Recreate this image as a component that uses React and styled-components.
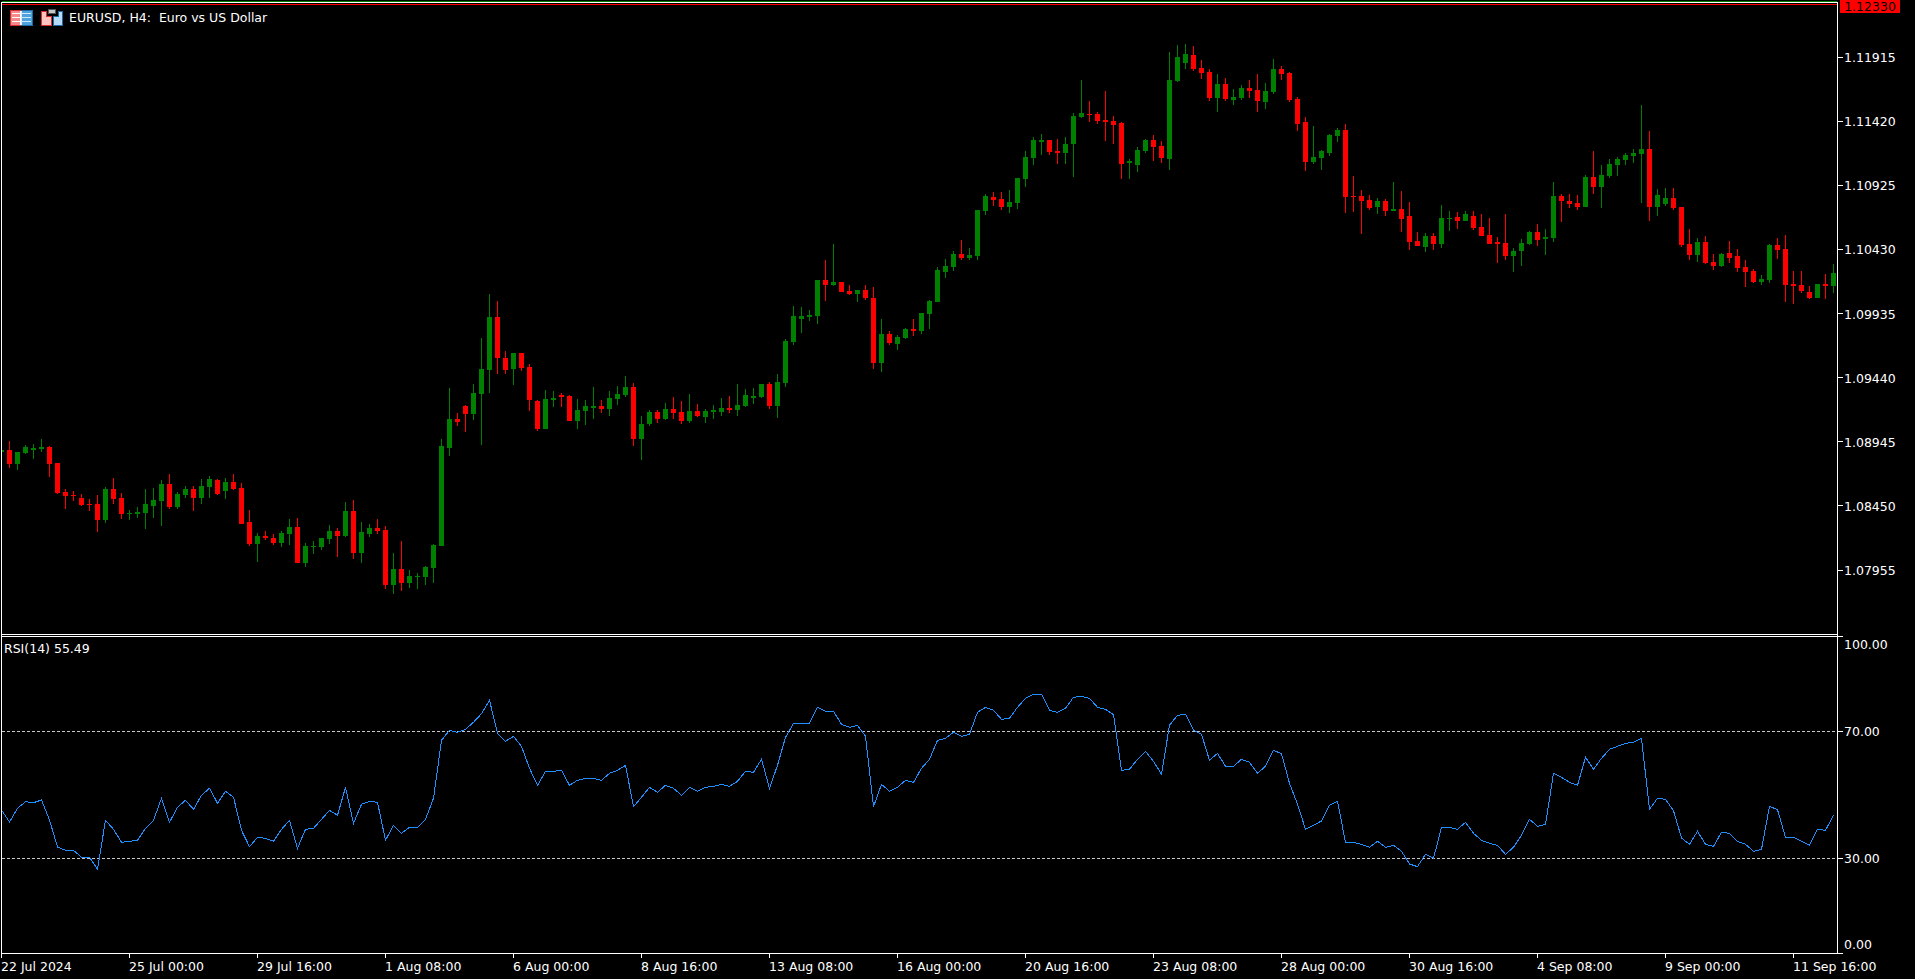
import React from "react";
import styled, { createGlobalStyle } from "styled-components";

const GREEN = "#008000";
const RED = "#ff0000";
const RSI_BLUE = "#1e90ff";

// Candle rows as [high, open/close top, open/close bottom, low], measured at 3x from the origin y0.
const candleBlocks = [
  { y0: 400, rows: `G 126 150 156 180
R 123 150 192 204
G 156 156 192 210
G 135 141 159 162
G 132 144 150 177
G 117 141 147 156
R 138 141 192 231
R 189 189 279 282
R 267 276 288 327
R 273 285 288 303
R 282 294 315 318
R 297 312 315 333
R 285 312 360 396
G 261 267 360 369
R 234 267 297 312
R 279 294 342 357
G 330 339 342 360
G 321 336 342 354
G 267 312 339 387
G 264 300 318 354
G 240 252 303 378
R 222 252 321 327
G 276 282 321 327
G 258 267 285 294
R 258 267 294 333
G 237 258 294 312
G 228 237 261 294
R 237 240 282 285
G 234 246 273 297
R 222 246 267 270
R 249 264 372 372
R 330 366 432 438
G 399 408 432 486
R 393 408 414 420
R 402 414 429 435
G 393 399 429 441
G 357 381 402 435
R 354 381 489 489
G 429 438 489 501
G 423 438 441 462
G 414 414 441 450
G 375 393 417 432
R 384 393 408 471
G 306 333 408 411
R 300 333 459 477
G 366 396 459 489
G 372 384 402 411
R 357 384 393 402
R 378 390 555 567
G 459 507 555 582
R 423 507 549 573
G 510 528 549 564
G 519 528 531 567
G 498 501 531 555
G 432 435 504 549
G 117 138 438 438
G -36 57 144 168
R 39 57 66 78
R 15 18 42 96` },
  { y0: 240, rows: `G 432 459 522 540
G 294 387 462 615
G 162 231 390 459
R 183 231 354 402
R 333 354 390 402
G 339 339 387 435
R 339 339 384 393
R 372 381 480 513
R 480 483 567 573
G 450 477 567 567
G 453 474 480 501
R 459 465 471 501
R 465 468 543 543
G 477 510 543 567
G 480 498 513 555
G 441 498 504 537
R 480 498 507 519
G 453 474 507 528
G 438 462 477 495
G 408 441 465 471
R 429 441 597 618
G 528 552 597 660
G 510 516 552 558
R 510 516 537 549
G 489 507 537 540
R 471 507 519 537
R 483 516 543 552
G 462 513 543 549
R 492 513 528 531
G 507 513 531 549
G 495 510 516 537
G 474 504 516 528
R 468 504 510 519
G 432 495 510 528
G 447 465 498 501
G 444 468 474 492
G 432 432 471 474
R 426 432 498 507
G 402 426 498 534
G 297 303 429 441
G 198 228 306 315
G 201 228 237 279
G 210 225 231 243
G 120 120 228 252
R 60 120 135 183
G 12 126 135 138
R 126 126 156 156
R 135 153 162 165
G 150 150 162 186
R 135 150 174 180
R 141 174 369 387
G 237 282 369 396
R 273 282 309 315
G 285 291 312 330
G 264 267 294 297
R 237 267 273 288
G 219 219 273 282
G 180 183 222 267
G 81 90 186 186
G 57 78 96 114
G 33 42 81 93` },
  { y0: 40, rows: `R 600 642 654 660
G 624 645 654 660
G 510 510 648 660
G 462 468 513 525
R 456 471 480 498
R 456 477 501 510
G 450 486 501 519
G 414 414 489 507
G 333 351 417 441
G 291 300 354 375
G 282 300 306 345
R 300 300 336 345
R 297 333 339 372
G 291 312 339 372
G 219 228 312 411
G 120 219 231 234
R 183 222 225 246
R 216 222 243 252
R 153 240 246 303
R 228 243 255 312
R 246 249 372 417
G 357 363 369 417
G 321 330 375 396
G 297 300 333 339
R 285 300 321 363
R 303 318 354 369
G 36 120 357 390
G 15 51 123 126
G 12 42 69 87
R 18 45 87 93
R 60 84 99 117
R 87 96 174 183
G 102 132 174 216
R 114 132 177 183
G 147 171 180 195
G 135 144 174 180
R 120 144 153 174
R 102 150 183 216
G 129 153 186 207
G 57 87 156 162
R 78 87 102 120
R 96 99 180 186
R 171 177 252 273
R 231 246 366 393
G 258 351 366 372
G 330 333 354 390
G 282 285 339 348
G 264 270 288 306
R 252 270 471 519
R 408 468 471 516
R 450 468 483 582
R 465 480 504 510
G 474 483 501 522
R 477 483 513 528
G 426 507 513 513
R 453 507 537 576
R 486 528 606 630
R 576 603 618 618
G 579 588 621 636
R 579 588 612 630
G 495 534 612 624` },
  { y0: 100, rows: `G 333 354 357 393
R 336 351 363 387
G 333 342 363 363
R 333 348 384 390
R 342 381 408 408
R 354 405 432 432
R 411 426 432 489
R 342 429 468 480
G 444 453 468 516
G 417 429 453 498
G 393 396 432 435
R 372 396 420 438
G 387 411 417 465
G 246 288 414 426
R 282 288 303 366
R 282 303 312 324
R 285 309 321 330
G 225 231 321 321
R 153 231 261 282
G 195 225 261 324
G 177 192 228 234
G 171 177 195 228
G 159 165 180 195
G 147 159 168 189
G 15 147 162 309
R 93 147 321 363
G 267 285 321 348
G 264 294 312 318
R 264 294 324 330
R 321 321 435 441
R 387 432 465 480
G 414 426 465 486
R 408 426 489 492
R 462 486 498 510
G 459 462 498 501
R 423 459 474 489
R 447 468 504 516
R 480 501 516 561
R 507 513 546 549
G 525 537 546 555
G 432 435 540 549
R 414 435 450 477
R 405 447 555 606
R 513 552 558 612
R 513 555 573 579
R 558 576 594 597
G 552 552 594 594
R 522 552 558 597
G 492 519 558 579` },
];

const candles = candleBlocks.flatMap(({ y0, rows }) =>
  rows.split("\n").map((row) => {
    const [dir, ...values] = row.trim().split(" ");
    const [high, top, bottom, low] = values.map((v) => Math.round(y0 + Number(v) / 3));
    return { color: dir === "G" ? GREEN : RED, high, top, bottom, low };
  })
);

// RSI samples per bar, measured at 3x from the origin y0.
const rsiBlocks = [
  { y0: 620, values: [570,606,565,545,548,540,600,681,691,691,712,712,748,601,628,667,664,661,625,601,535,607,562,541,568,526,505,550,514,532,631,680,652,655,664,628,601,685,628,625,598,571,586,502,610,553,544,547,661,616,640,622,622,598,535,361,331,337,328] },
  { y0: 680, values: [127,101,61,160,184,169,199,265,316,274,274,271,316,301,295,295,301,280,271,256,380,352,322,337,316,325,346,322,334,322,319,313,319,304,274,277,238,325,256,172,130,130,130,82,94,94,133,142,136,169,380,313,334,322,301,307,265,238,181,175,157,169,163,97,82,91,118,115,82,55,43,43,91,97,85,52,49,55,82,88,104,271,268,238,214,244,283,136,106,103,151,163,241,220,259,259,238,247,280,259,211,221,310,373,448,436,423,376,364,487,487,493,502,484,502,496,514,552,560,523,535,442,442,448,427,460,481,490,496] },
  { y0: 620, values: [703,682,646,598,619,613,460,472,487,496,412,448,415,388,379,370,367,355,568,535,538,572,654,673,634,673,679,637,640,664,673,694,688,559,569,652,652,664,676,628,631,586] },
];

const rsiPoints = rsiBlocks
  .flatMap(({ y0, values }) => values.map((v) => y0 + v / 3))
  .map((y, i) => `${1.5 + 8 * i},${y.toFixed(1)}`)
  .join(" ");

const priceLabels = ["1.11915", "1.11420", "1.10925", "1.10430", "1.09935", "1.09440", "1.08945", "1.08450", "1.07955"];
const timeLabels = ["22 Jul 2024", "25 Jul 00:00", "29 Jul 16:00", "1 Aug 08:00", "6 Aug 00:00", "8 Aug 16:00", "13 Aug 08:00", "16 Aug 00:00", "20 Aug 16:00", "23 Aug 08:00", "28 Aug 00:00", "30 Aug 16:00", "4 Sep 08:00", "9 Sep 00:00", "11 Sep 16:00"];
const rsiScale = [
  { label: "100.00", gap: 0, height: 18, tick: "flex-start" },
  { label: "70.00", gap: 68, height: 19, tick: "center" },
  { label: "30.00", gap: 108, height: 19, tick: "center" },
  { label: "0.00", gap: 68, height: 18, tick: "flex-end" },
];

const GlobalStyle = createGlobalStyle`
  html, body {
    margin: 0;
    height: 100%;
    background: #000;
    overflow: hidden;
  }
`;

const Terminal = styled.div`
  display: grid;
  grid-template-columns: 1838px 77px;
  grid-template-rows: 954px 25px;
  width: 1915px;
  height: 979px;
  background: #000;
  color: #fff;
  font: 12.5px/14px "DejaVu Sans", sans-serif;
`;

const ChartFrame = styled.div`
  display: flex;
  flex-direction: column;
  margin-left: 1px;
`;

const AskLine = styled.div`
  flex: 0 0 1px;
  margin: 1px 1px 0 1px;
  background: ${GREEN};
`;

const Pane = styled.div`
  position: relative;
  flex: ${(p) => (p.$grow ? "1 1 0" : "0 0 auto")};
  height: ${(p) => (p.$height ? `${p.$height}px` : "auto")};
  box-sizing: border-box;
  border: 1px solid #fff;
`;

const PaneGap = styled.div`
  flex: 0 0 1px;
  border-left: 1px solid #fff;
  border-right: 1px solid #fff;
`;

const Plot = styled.svg`
  display: block;
  width: 1835px;
  height: 100%;
`;

const ChartTitle = styled.div`
  position: absolute;
  left: 8px;
  top: 6px;
  display: flex;
  align-items: center;
  gap: 8px;
  height: 17px;
  white-space: pre;
`;

const TitleText = styled.span`
  margin-left: -3px;
`;

const IndicatorTitle = styled.div`
  position: absolute;
  left: 2px;
  top: 5px;
  white-space: pre;
`;

const ScaleColumn = styled.div`
  display: flex;
  flex-direction: column;
`;

const PriceScale = styled.div`
  height: 636px;
  display: flex;
  flex-direction: column;
`;

const PriceTag = styled.div`
  flex: 0 0 13px;
  width: 60px;
  margin: 0 0 12px 2px;
  background: ${RED};
  color: #000;
  line-height: 13px;
  text-align: center;
`;

const ScaleRow = styled.div`
  display: flex;
  align-items: center;
  flex: 0 0 auto;
  height: ${(p) => p.$height}px;
  margin-top: ${(p) => p.$gap || 0}px;
`;

const ScaleTick = styled.span`
  align-self: ${(p) => p.$align || "center"};
  flex: 0 0 5px;
  height: 1px;
  background: #fff;
`;

const ScaleLabel = styled.span`
  margin-left: 1px;
  padding-top: ${(p) => p.$nudge || 0}px;
`;

const TimeAxis = styled.div`
  grid-column: 1 / -1;
  display: flex;
  margin-left: 1px;
`;

const TimeCell = styled.div`
  flex: 0 0 128px;
  display: flex;
  flex-direction: column;
`;

const TimeTick = styled.span`
  width: 1px;
  height: 4px;
  background: #fff;
`;

const TimeLabel = styled.span`
  margin-top: 2px;
  white-space: nowrap;
`;

const TableIcon = () => (
  <svg width="23" height="16" viewBox="0 0 23 16" shapeRendering="crispEdges">
    <rect width="11" height="16" fill="#d92c2c" />
    <rect x="11" width="12" height="16" fill="#1b6aa5" />
    <rect x="1" y="1" width="10" height="14" fill="#f48a8a" />
    <rect x="11" y="1" width="11" height="14" fill="#4fa3dc" />
    <rect x="2" y="3" width="8" height="1" fill="#fff" />
    <rect x="2" y="7" width="8" height="1" fill="#fff" />
    <rect x="2" y="11" width="8" height="1" fill="#fff" />
    <rect x="12" y="3" width="9" height="1" fill="#cfe8fa" />
    <rect x="12" y="7" width="9" height="1" fill="#cfe8fa" />
    <rect x="12" y="11" width="9" height="1" fill="#cfe8fa" />
    <rect x="10" y="1" width="1" height="14" fill="#fff" />
    <rect x="11" y="1" width="1" height="14" fill="#d8ecfa" />
  </svg>
);

const SaveIcon = () => (
  <svg width="23" height="17" viewBox="0 0 23 17" shapeRendering="crispEdges">
    <path d="M0 2H6V7H11V17H0Z" fill="#d92c2c" />
    <path d="M1 3H5V8H10V16H1Z" fill="#ffc4c0" />
    <path d="M22 2H17V7H12V17H22Z" fill="#1b6aa5" />
    <path d="M21 3H18V8H13V16H21Z" fill="#b4dcf8" />
    <rect x="7" y="0" width="8" height="5" fill="#555" />
    <rect x="8" y="1" width="6" height="3" fill="#c4c4c4" />
  </svg>
);

export default function App() {
  return (
    <Terminal>
      <GlobalStyle />
      <ChartFrame>
        <AskLine />
        <Pane $height={633}>
          <Plot viewBox="2 3 1835 631" shapeRendering="crispEdges">
            <rect x="2" y="4" width="1835" height="1" fill={RED} />
            {candles.map((c, i) => (
              <g key={i} fill={c.color}>
                <rect x={1 + 8 * i} y={c.high} width="1" height={Math.max(c.low - c.high, 1)} />
                <rect x={8 * i - 1} y={c.top} width="5" height={Math.max(c.bottom - c.top, 1)} />
              </g>
            ))}
          </Plot>
          <ChartTitle>
            <TableIcon />
            <SaveIcon />
            <TitleText>EURUSD, H4:  Euro vs US Dollar</TitleText>
          </ChartTitle>
        </Pane>
        <PaneGap />
        <Pane $grow>
          <Plot viewBox="2 637 1835 316" shapeRendering="crispEdges">
            <line x1="2" x2="1837" y1="731.5" y2="731.5" stroke="#c8c8c8" strokeDasharray="3 2" />
            <line x1="2" x2="1837" y1="858.5" y2="858.5" stroke="#c8c8c8" strokeDasharray="3 2" />
            <polyline points={rsiPoints} fill="none" stroke={RSI_BLUE} strokeWidth="1" />
          </Plot>
          <IndicatorTitle>RSI(14) 55.49</IndicatorTitle>
        </Pane>
      </ChartFrame>
      <ScaleColumn>
        <PriceScale>
          <PriceTag>1.12330</PriceTag>
          {priceLabels.map((label) => (
            <ScaleRow key={label} $height={64.125}>
              <ScaleTick />
              <ScaleLabel $nudge={2}>{label}</ScaleLabel>
            </ScaleRow>
          ))}
        </PriceScale>
        {rsiScale.map((row) => (
          <ScaleRow key={row.label} $height={row.height} $gap={row.gap}>
            <ScaleTick $align={row.tick} />
            <ScaleLabel>{row.label}</ScaleLabel>
          </ScaleRow>
        ))}
      </ScaleColumn>
      <TimeAxis>
        {timeLabels.map((label) => (
          <TimeCell key={label}>
            <TimeTick />
            <TimeLabel>{label}</TimeLabel>
          </TimeCell>
        ))}
      </TimeAxis>
    </Terminal>
  );
}
